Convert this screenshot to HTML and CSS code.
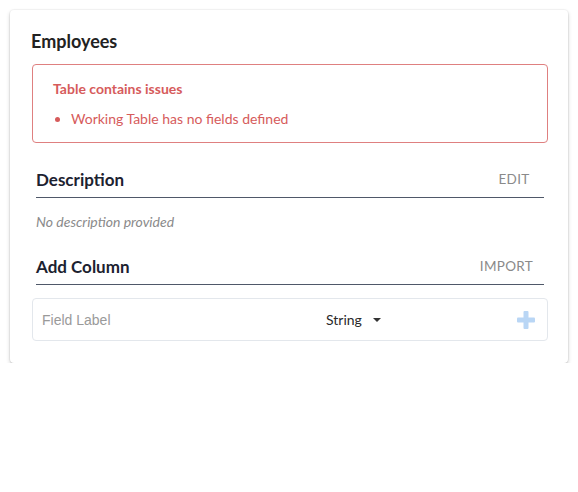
FILE: index.html
```html
<!DOCTYPE html>
<html>
<head>
<meta charset="utf-8">
<link rel="stylesheet" href="styles.css">
</head>
<body>
<div class="card">
  <h2 class="title">Employees</h2>
  <div class="alert">
    <div class="alert-title">Table contains issues</div>
    <ul class="alert-list">
      <li>Working Table has no fields defined</li>
    </ul>
  </div>
  <div class="section-head">
    <span class="section-title">Description</span>
    <button class="text-btn">EDIT</button>
  </div>
  <p class="empty">No description provided</p>
  <div class="section-head">
    <span class="section-title">Add Column</span>
    <button class="text-btn">IMPORT</button>
  </div>
  <div class="field-row">
    <input class="field-input" type="text" placeholder="Field Label">
    <div class="type-select">
      <span>String</span>
      <svg class="caret" width="8" height="4" viewBox="0 0 8 4"><path d="M0 0H8L4 4Z" fill="#333"/></svg>
    </div>
    <svg class="plus" width="18" height="18" viewBox="0 0 18 18">
      <rect x="6.5" y="0" width="5" height="18" rx="1" fill="#b9d6f5"/>
      <rect x="0" y="6.5" width="18" height="5" rx="1" fill="#b9d6f5"/>
    </svg>
  </div>
</div>
</body>
</html>
```
FILE: styles.css
```css
* { box-sizing: border-box; }
html, body { margin: 0; padding: 0; background: #fff; }
body {
  font-family: Lato, "Open Sans", sans-serif;
  color: #222;
}
.card {
  margin: 10px 0 0 10px;
  width: 558px;
  padding: 20px 20px 22px 22px;
  background: #fff;
  border-radius: 4px;
  box-shadow: 0 2px 4px rgba(0,0,0,0.18), 0 1px 1px rgba(0,0,0,0.08), 0 0 0 1px rgba(0,0,0,0.035);
}
.title {
  margin: 0 0 12px -1px;
  font-size: 18px;
  line-height: 22px;
  font-weight: 700;
  color: #222;
}
.alert {
  border: 1px solid #df8080;
  border-radius: 4px;
  padding: 15px 20px 18px 20px;
  color: #d65b5b;
  height: 79px;
}
.alert-title {
  font-size: 14px;
  font-weight: 700;
  line-height: 17px;
}
.alert-list {
  margin: 13px 0 0 0;
  padding-left: 18px;
  font-size: 14px;
  line-height: 17px;
}
.section-head {
  margin: 18px 4px 0 4px;
  height: 37px;
  display: flex;
  align-items: center;
  justify-content: space-between;
  border-bottom: 1px solid #4f5869;
}
.section-title {
  font-size: 17px;
  font-weight: 700;
  color: #1c2230;
}
.text-btn {
  border: 0;
  background: none;
  font-family: Lato, sans-serif;
  font-size: 13.5px;
  letter-spacing: 0.3px;
  color: #8a8a8a;
  min-width: 60px;
  padding: 0 11px;
  height: 36px;
  text-align: center;
}
.empty {
  margin: 16px 4px 0 4px;
  font-size: 14px;
  line-height: 16px;
  font-style: italic;
  color: #8a8a8a;
}
.field-row {
  margin-top: 13px;
  height: 43px;
  border: 1px solid #e3e7ec;
  border-radius: 4px;
  padding: 0 12px 0 9px;
  display: grid;
  grid-template-columns: 1fr 191px 18px;
  align-items: center;
}
.field-input {
  border: 0;
  outline: none;
  padding: 0;
  font-family: "Liberation Sans", Arial, sans-serif;
  font-size: 14px;
  color: #333;
  background: transparent;
  width: 100%;
}
.field-input::placeholder { color: #9a9a9a; }
.type-select {
  display: flex;
  align-items: center;
  gap: 11px;
  font-size: 14px;
  color: #2a2a2a;
}
.caret { display: block; }
.plus { display: block; }
```
